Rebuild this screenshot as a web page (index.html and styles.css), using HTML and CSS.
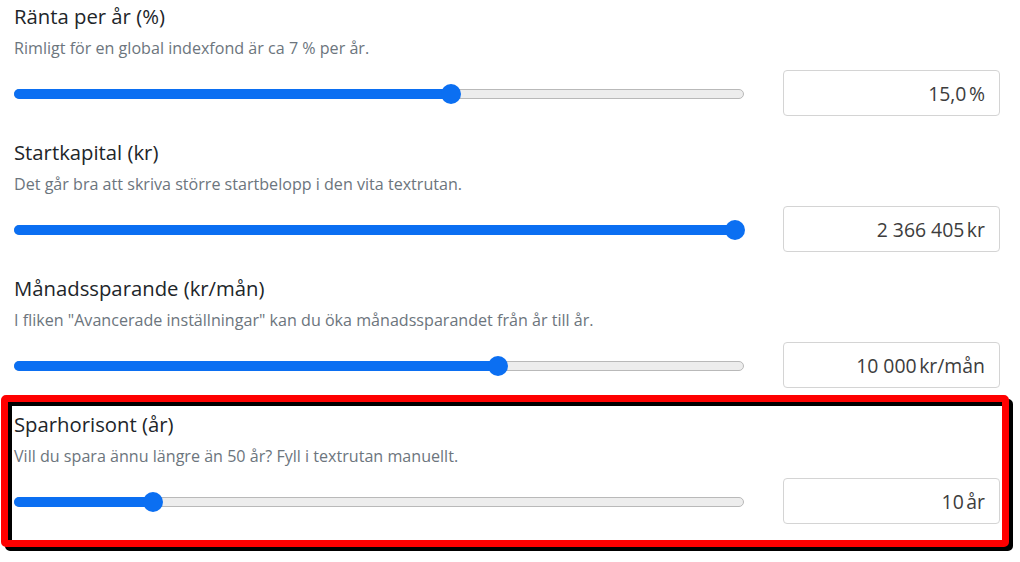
FILE: index.html
```html
<!DOCTYPE html>
<html lang="sv">
<head>
<meta charset="utf-8">
<title>Sparkalkylator</title>
<link rel="stylesheet" href="styles.css">
</head>
<body>
<div class="page">
  <div class="field">
    <div class="label">Ränta per år (%)</div>
    <div class="help">Rimligt för en global indexfond är ca 7 % per år.</div>
    <div class="row">
      <div class="slider">
        <div class="track"></div>
        <div class="rail">
          <div class="fill" style="width: calc(60.1% + 9px)"></div>
          <div class="thumb" style="left: 60.1%"></div>
        </div>
      </div>
      <div class="value">15,0&#8239;%</div>
    </div>
  </div>
  <div class="field">
    <div class="label">Startkapital (kr)</div>
    <div class="help">Det går bra att skriva större startbelopp i den vita textrutan.</div>
    <div class="row">
      <div class="slider">
        <div class="track"></div>
        <div class="rail">
          <div class="fill" style="width: calc(100% + 9px)"></div>
          <div class="thumb" style="left: 100%"></div>
        </div>
      </div>
      <div class="value">2 366 405&#8239;kr</div>
    </div>
  </div>
  <div class="field">
    <div class="label">Månadssparande (kr/mån)</div>
    <div class="help">I fliken "Avancerade inställningar" kan du öka månadssparandet från år till år.</div>
    <div class="row">
      <div class="slider">
        <div class="track"></div>
        <div class="rail">
          <div class="fill" style="width: calc(66.7% + 9px)"></div>
          <div class="thumb" style="left: 66.7%"></div>
        </div>
      </div>
      <div class="value">10 000&#8239;kr/mån</div>
    </div>
  </div>
  <div class="field highlighted">
    <div class="label">Sparhorisont (år)</div>
    <div class="help">Vill du spara ännu längre än 50 år? Fyll i textrutan manuellt.</div>
    <div class="row">
      <div class="slider">
        <div class="track"></div>
        <div class="rail">
          <div class="fill" style="width: calc(18.3% + 9px)"></div>
          <div class="thumb" style="left: 18.3%"></div>
        </div>
      </div>
      <div class="value">10&#8239;år</div>
    </div>
  </div>
</div>
</body>
</html>
```
FILE: styles.css
```css
html, body {
  margin: 0;
  padding: 0;
  background: #ffffff;
}
body {
  font-family: "Open Sans", "Noto Sans", sans-serif;
  color: #212529;
}
.page {
  width: 986px;
  padding: 4px 0 36px 14px;
  display: flex;
  flex-direction: column;
  gap: 24px;
}
.field {
  position: relative;
}
.label {
  font-size: 20.3px;
  line-height: 24px;
  color: #212529;
}
.help {
  margin-top: 9px;
  font-size: 16.1px;
  line-height: 22px;
  color: #6c757d;
}
.row {
  margin-top: 11px;
  display: flex;
  align-items: center;
  gap: 39px;
}
.slider {
  flex: 1;
  position: relative;
  height: 20px;
  margin-top: 2px;
}
.track {
  position: absolute;
  left: 0;
  right: 0;
  top: 5px;
  height: 10px;
  box-sizing: border-box;
  background: #ededed;
  border: 1px solid #b9b9b9;
  border-radius: 5px;
}
.rail {
  position: absolute;
  top: 0;
  bottom: 0;
  left: 9px;
  right: 9px;
}
.fill {
  position: absolute;
  left: -9px;
  top: 5px;
  height: 10px;
  background: #0b6ff2;
  border-radius: 5px 0 0 5px;
}
.thumb {
  position: absolute;
  top: 0;
  width: 20px;
  height: 20px;
  margin-left: -10px;
  border-radius: 50%;
  background: #0b6ff2;
}
.value {
  width: 217px;
  height: 46px;
  box-sizing: border-box;
  border: 1px solid #d4d4d4;
  border-radius: 4px;
  padding: 0 14px;
  display: flex;
  align-items: center;
  justify-content: flex-end;
  font-size: 19.4px;
  color: #3d3d3d;
}
.highlighted::before,
.highlighted::after {
  content: "";
  position: absolute;
  left: -13px;
  top: -17px;
  width: 1008px;
  height: 152px;
  box-sizing: border-box;
  border: 7px solid;
  border-radius: 5px;
  pointer-events: none;
}
.highlighted::before {
  border-color: #000000;
  transform: translate(4px, 4px);
}
.highlighted::after {
  border-color: #ff0000;
}
```
